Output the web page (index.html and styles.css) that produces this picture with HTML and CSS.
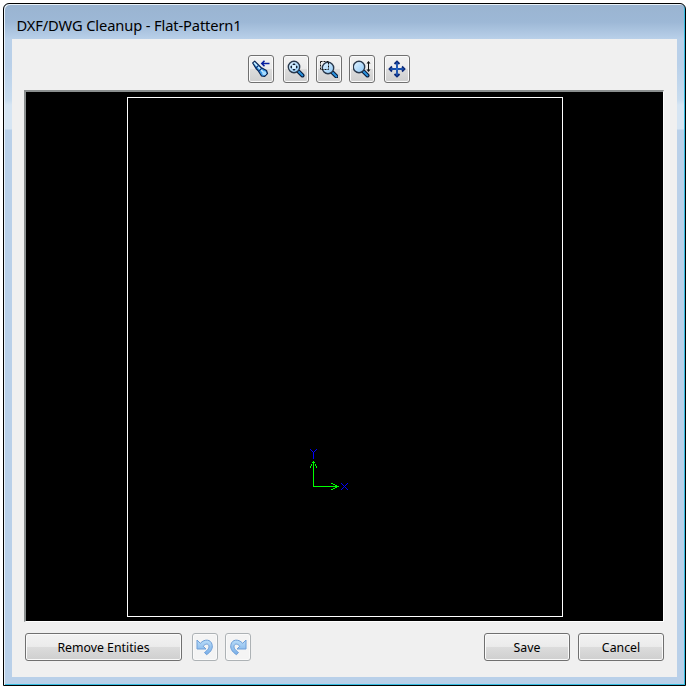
FILE: index.html
```html
<!DOCTYPE html>
<html lang="en">
<head>
<meta charset="utf-8">
<title>DXF/DWG Cleanup</title>
<link rel="stylesheet" href="styles.css">
</head>
<body>
<svg width="0" height="0" class="defs" aria-hidden="true">
  <defs>
    <linearGradient id="lens" x1="0" y1="0" x2="1" y2="1"><stop offset="0" stop-color="#e4f4ff"/><stop offset="1" stop-color="#8cc8f8"/></linearGradient>
    <linearGradient id="turn" x1="0" y1="0" x2="0" y2="1"><stop offset="0" stop-color="#b9dcf8"/><stop offset="1" stop-color="#78aee8"/></linearGradient>
    <g id="magnifier">
      <path d="M11.500 11.500 15.500 15.500" stroke="#081c3c" stroke-width="4" stroke-linecap="round"/>
      <path d="M11.800 11.800 15.400 15.400" stroke="#2a94e0" stroke-width="2" stroke-linecap="round"/>
      <circle cx="7" cy="7" r="5.700" fill="url(#lens)" stroke="#28384c" stroke-width="1.400"/>
    </g>
    <g id="undo-arrow">
      <path d="M2 3v9h9L8.200 9.200C10 7 12.700 6.300 13.700 8.300c1 2-.5 4.500-4.200 7.200l2 2.200C16.500 14.500 18 11 17 7.300 15.800 2.600 10 1.300 5.300 6.300Z" fill="url(#turn)" stroke="#6f9fd8" stroke-width="1"/>
    </g>
  </defs>
</svg>
<div class="window">
  <header class="title">DXF/DWG Cleanup - Flat-Pattern1</header>
  <main class="client">
    <div class="toolbar">
      <button class="btn tool" aria-label="Previous view">
        <svg width="18" height="18" viewBox="0 0 18 18" fill="none">
          <path d="M.7 3 2.700 1.200 6.500 5 9 7.500 14.500 10.500 15.500 13.500 12.500 16.500 9.500 16 6 10.500 4 8.500Z" fill="#3d9ae8" stroke="#0a2450" stroke-width="1.200" stroke-linejoin="round"/>
          <path d="M2 2.500 12 13" stroke="#c8ecff" stroke-width="1.600"/>
          <path d="M4 8 6.500 5.500M6.500 11.500 10 8" stroke="#0c3880" stroke-width="1.100"/>
          <circle cx="12.300" cy="13.300" r="2" fill="#a8dcff"/>
          <path d="M10 3.500H17.500M12.500 .8 9.800 3.500 12.500 6.200" stroke="#0820a0" stroke-width="1.600"/>
        </svg>
      </button>
      <button class="btn tool" aria-label="Zoom to fit">
        <svg width="18" height="18" viewBox="0 0 18 18" fill="none">
          <use href="#magnifier"/>
          <path d="M5.300 5h3.400L7 3ZM5.300 9h3.400L7 11ZM5 5.300v3.400L3 7ZM9 5.300v3.400L11 7Z" fill="#102030"/>
          <rect x="5.500" y="5.500" width="3" height="3" fill="#e4f6ff"/>
        </svg>
      </button>
      <button class="btn tool" aria-label="Zoom to area">
        <svg width="18" height="18" viewBox="0 0 18 18" fill="none">
          <g transform="translate(1 1)"><use href="#magnifier"/></g>
          <path d="M.5 1.500H8.500V9.500H.5Z" stroke="#111" stroke-dasharray="2 1"/>
        </svg>
      </button>
      <button class="btn tool" aria-label="Zoom in or out">
        <svg width="18" height="18" viewBox="0 0 18 18" fill="none">
          <g transform="translate(-1 0)"><use href="#magnifier"/></g>
          <path d="M15.500 2V11" stroke="#111"/><path d="M13.500 3.500h4L15.500 1ZM13.500 9.500h4L15.500 12Z" fill="#111"/>
        </svg>
      </button>
      <button class="btn tool" aria-label="Pan">
        <svg width="18" height="18" viewBox="0 0 18 18" fill="none">
          <path d="M9 2V16M2 9H16M6.500 4 9 1.500 11.500 4M6.500 14 9 16.500 11.500 14M4 6.500 1.500 9 4 11.500M14 6.500 16.500 9 14 11.500" stroke="#0a2878" stroke-width="1.800"/>
          <path d="M9 2.500V15.500M2.500 9H15.500" stroke="#2877e0" stroke-width="1"/>
        </svg>
      </button>
    </div>
    <div class="canvas">
      <svg width="637" height="529" viewBox="0 0 637 529" fill="none" shape-rendering="crispEdges">
        <rect x="101.500" y="5.500" width="435" height="519" stroke="#fff"/>
        <path d="M287 369h1v25h25v1h-26ZM286 370h3v1h-3ZM285 372h1v2h-1ZM289 372h1v2h-1ZM284 374h1v2h-1ZM290 374h1v2h-1ZM305 391h2v1h-2ZM307 392h2v1h-2ZM309 393h2v1h-2ZM309 395h2v1h-2ZM307 396h2v1h-2ZM305 397h2v1h-2Z" fill="#0f0"/>
        <path d="M284 357h1v1h-1ZM285 358h1v1h-1ZM286 359h1v1h-1ZM290 357h1v1h-1ZM289 358h1v1h-1ZM288 359h1v1h-1ZM287 360h1v7h-1ZM315 391h1v1h-1ZM316 392h1v1h-1ZM317 393h1v1h-1ZM318 394h1v1h-1ZM319 395h1v1h-1ZM320 396h1v1h-1ZM321 397h1v1h-1ZM321 391h1v1h-1ZM320 392h1v1h-1ZM319 393h1v1h-1ZM317 395h1v1h-1ZM316 396h1v1h-1ZM315 397h1v1h-1Z" fill="#00f"/>
      </svg>
    </div>
    <div class="actions">
      <button class="btn remove">Remove Entities</button>
      <button class="btn history" aria-label="Undo"><svg width="20" height="20" viewBox="0 0 20 20"><use href="#undo-arrow"/></svg></button>
      <button class="btn history" aria-label="Redo"><svg class="redo" width="20" height="20" viewBox="0 0 20 20"><use href="#undo-arrow"/></svg></button>
      <span class="spacer"></span>
      <button class="btn answer">Save</button>
      <button class="btn answer">Cancel</button>
    </div>
  </main>
</div>
</body>
</html>
```
FILE: styles.css
```css
* { box-sizing: border-box; }
body {
  margin: 0;
  padding: 3px;
  background: #fff;
  font-family: "Noto Sans", "Open Sans", sans-serif;
  color: #000;
}
.defs { position: absolute; }
.window {
  width: 683px;
  height: 683px;
  padding: 0 8px 7px;
  border: 1px solid #000;
  border-radius: 6px 6px 0 0;
  background:
    linear-gradient(#9ab4d1, #9db8d6 18px, #b9d0e9 35px, transparent 35px),
    linear-gradient(#b9d0e9 0 60px, #c8dcef 96px, #d6e5f3 101px 125px, #b9d0e9 126px);
  box-shadow: inset 1px 1px #e9f2fa, inset -1px -1px #35bce0;
}
.title {
  height: 35px;
  padding: 9px 0 0 4.500px;
  font-size: 14.700px;
  line-height: 24px;
  letter-spacing: -.13px;
  white-space: nowrap;
}
.client {
  width: 665px;
  height: 638px;
  padding: 16px 13px 0 12px;
  background: #f0f0f0;
}
.btn {
  display: flex;
  align-items: center;
  justify-content: center;
  height: 28px;
  padding: 0;
  border: 1px solid #707070;
  border-radius: 3px;
  background: linear-gradient(#f2f2f2 0%, #ebebeb 48%, #dcdcdc 50%, #cfcfcf 100%);
  box-shadow: inset 0 0 0 1px #fafafa;
  font: 12.300px/18px "Noto Sans", "Open Sans", sans-serif;
  color: #000;
}
.remove, .answer { padding-top: 1px; }
.btn svg { display: block; }
.toolbar {
  display: flex;
  gap: 7px;
  height: 35px;
  padding-left: 224px;
}
.tool { width: 26px; }
.tool:first-child, .tool:nth-child(4) { margin-right: 2px; }
.canvas {
  width: 640px;
  height: 532px;
  border: solid;
  border-width: 2px 1px 1px 2px;
  border-color: #8b8f8f #fff #fff #8b8f8f;
  background: #000;
}
.canvas svg { display: block; }
.actions {
  display: flex;
  padding: 11px 0 0 1px;
}
.remove { width: 157px; margin-right: 10px; }
.history {
  width: 26px;
  margin-right: 7px;
  border-color: #adb2b5;
  background: #f4f4f4;
}
.redo { transform: scaleX(-1); }
.spacer { flex: 1; }
.answer { width: 86px; }
.answer + .answer { margin-left: 8px; }
```
